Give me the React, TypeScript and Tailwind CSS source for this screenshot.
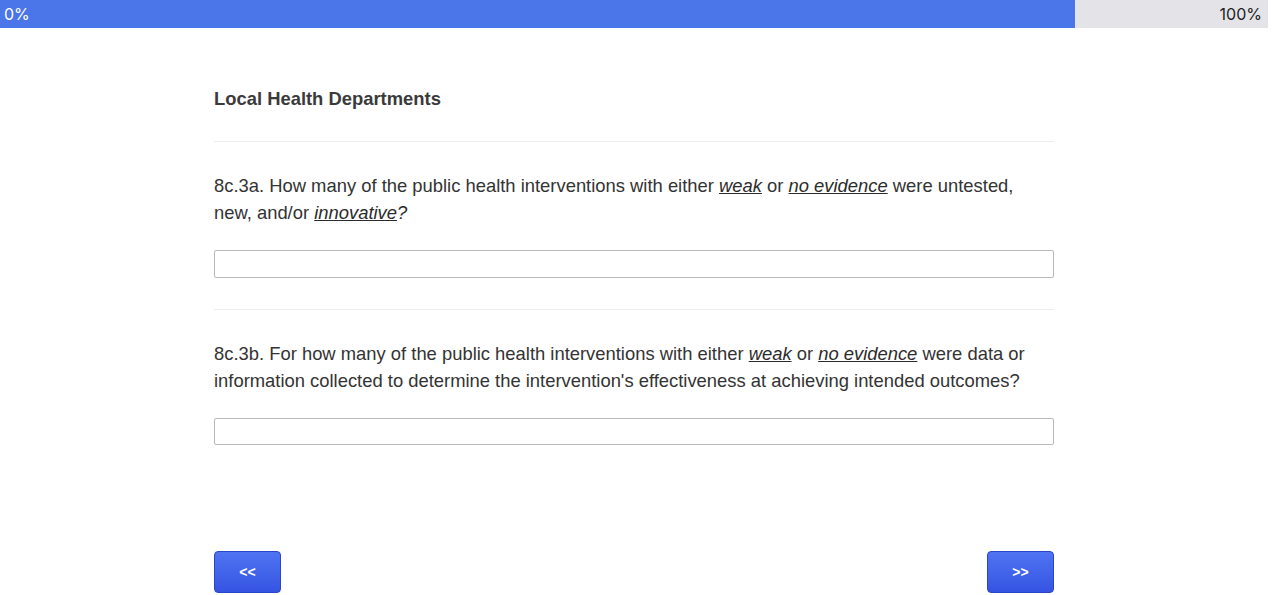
import React from 'react';

const Q = ({ children }: { children: React.ReactNode }) => (
  <u className="italic text-[#2b2b2b]">{children}</u>
);

const App = () => {
  return (
    <div className="min-h-[595px] bg-white font-['Liberation_Sans',Arial,sans-serif] text-[#333]">
      <div className="w-[1268px]">
        {/* Progress bar */}
        <div className="flex h-[28px] w-full bg-[#e4e4e8] font-['Inter',sans-serif] text-[16px]">
          <div className="flex w-[1075px] items-center bg-[#4a76ea] pl-[4px] text-white">0%</div>
          <div className="flex flex-1 items-center justify-end pr-[6px] text-[#222]">100%</div>
        </div>

        <div className="mx-auto w-[840px] pt-[59px]">
          <h2 className="text-[18.4px] font-bold leading-[24px] text-[#3a3a3a]">Local Health Departments</h2>
          <div className="mt-[30px] border-t border-[#ececec]" />

          <p className="mt-[30px] text-[18.4px] leading-[27px]">
            8c.3a. How many of the public health interventions with either <Q>weak</Q> or <Q>no evidence</Q> were untested,
            new, and/or <em className="text-[#2b2b2b]"><u>innovative</u>?</em>
          </p>
          <input
            type="text"
            className="mt-[24px] block h-[28px] w-full rounded-[2px] border border-[#b9b9b9] bg-white"
          />
          <div className="mt-[31px] border-t border-[#ececec]" />

          <p className="mt-[30px] text-[18.4px] leading-[27px]">
            8c.3b. For how many of the public health interventions with either <Q>weak</Q> or <Q>no evidence</Q> were data or
            information collected to determine the intervention's effectiveness at achieving intended outcomes?
          </p>
          <input
            type="text"
            className="mt-[24px] block h-[27px] w-full rounded-[2px] border border-[#b9b9b9] bg-white"
          />

          <div className="mt-[106px] flex justify-between">
            <button className="h-[42px] w-[67px] rounded-[4px] border border-[#2a45c8] bg-gradient-to-b from-[#4f74f2] to-[#3653e2] text-[14px] font-bold text-white">
              &lt;&lt;
            </button>
            <button className="h-[42px] w-[67px] rounded-[4px] border border-[#2a45c8] bg-gradient-to-b from-[#4f74f2] to-[#3653e2] text-[14px] font-bold text-white">
              &gt;&gt;
            </button>
          </div>
        </div>
      </div>
    </div>
  );
};

export default App;
